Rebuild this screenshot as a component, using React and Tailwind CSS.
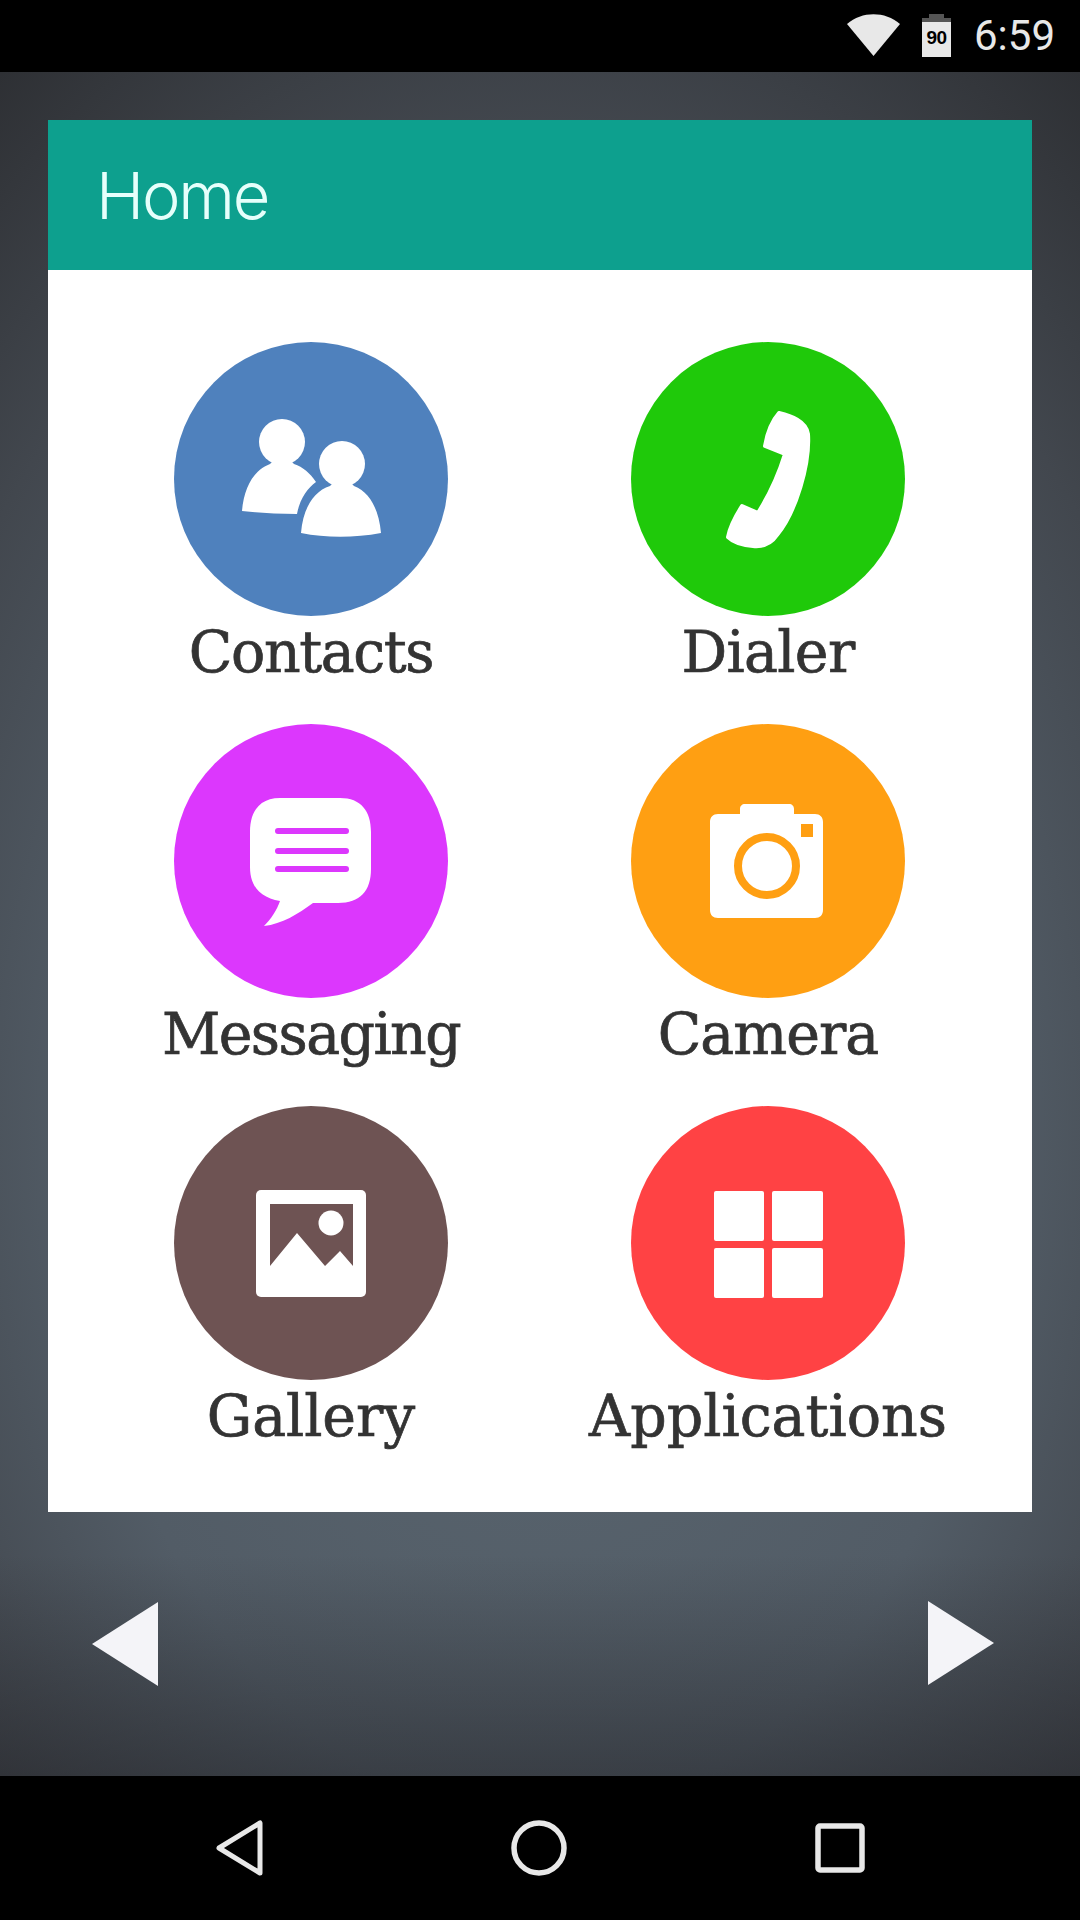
const iconClass = 'w-full h-full blur-[0.6px]';

const Contacts = () => (
  <svg viewBox="0 0 274 274" className={iconClass} fill="#fff">
    <circle cx="108" cy="100" r="23" />
    <path d="M68 169C70 145 80 128 96 122L100 118L116 118L120 122C129 125 136 131 142 140C134 146 126 156 123 172C104 172 85 171 68 169Z" />
    <circle cx="168" cy="122" r="23" />
    <path d="M127 191C129 166 140 149 156 144L160 140L176 140L180 144C196 150 205 168 207 191C180 196 152 196 127 191Z" />
  </svg>
);

const Dialer = () => (
  <svg viewBox="0 0 274 274" className={iconClass} fill="#fff" stroke="#fff" strokeWidth="4" strokeLinejoin="round">
    <path d="M148 71C160 74 175 79 177 92C179 122 165 170 146 193C140 202 132 205 122 204C112 203 102 200 97 195C99 184 106 172 111 164L127 171C137 155 146 138 154 112L134 104C136 92 140 80 148 71Z" />
  </svg>
);

const Messaging = () => (
  <svg viewBox="0 0 274 274" className={iconClass}>
    <path
      fill="#fff"
      d="M106 74L166 74C187 74 197 87 197 108L197 145C197 167 186 179 164 179L139 179C124 190 108 200 90 202C97 195 103 186 106 177C88 174 76 164 76 143L76 108C76 87 86 74 106 74Z"
    />
    <path stroke="#dc37fd" strokeWidth="6" strokeLinecap="round" d="M104 107H172M104 127H172M104 145H172" />
  </svg>
);

const Camera = () => (
  <svg viewBox="0 0 274 274" className={iconClass}>
    <path
      fill="#fff"
      d="M109 90L109 85C109 82 111 80 114 80L158 80C161 80 163 82 163 85L163 90L184 90C189 90 192 93 192 98L192 186C192 191 189 194 184 194L87 194C82 194 79 191 79 186L79 98C79 93 82 90 87 90Z"
    />
    <circle cx="136" cy="142" r="29" fill="none" stroke="#ff9f12" strokeWidth="8" />
    <rect x="170" y="100" width="12" height="13" fill="#ff9f12" />
  </svg>
);

const Gallery = () => (
  <svg viewBox="0 0 274 274" className={iconClass}>
    <rect x="82" y="84" width="110" height="107" rx="5" fill="#fff" />
    <path fill="#6e5353" d="M96 98H179V160L166 145L151 160L123 127L96 160Z" />
    <circle cx="157" cy="117" r="12.5" fill="#fff" />
  </svg>
);

const Applications = () => (
  <svg viewBox="0 0 274 274" className={iconClass} fill="#fff">
    <rect x="83" y="85" width="50" height="50" rx="2" />
    <rect x="141" y="85" width="51" height="50" rx="2" />
    <rect x="83" y="142" width="50" height="50" rx="2" />
    <rect x="141" y="142" width="51" height="50" rx="2" />
  </svg>
);

const apps = [
  { name: 'Contacts', color: 'bg-[#4f81bd]', track: 'tracking-[-1.4px]', Icon: Contacts },
  { name: 'Dialer', color: 'bg-[#1fc90a]', track: 'tracking-[-0.7px]', Icon: Dialer },
  { name: 'Messaging', color: 'bg-[#dc37fd]', track: 'tracking-[-1.6px]', Icon: Messaging },
  { name: 'Camera', color: 'bg-[#ff9f12]', track: 'tracking-[-1px]', Icon: Camera },
  { name: 'Gallery', color: 'bg-[#6e5353]', track: 'tracking-[-0.1px]', Icon: Gallery },
  { name: 'Applications', color: 'bg-[#ff4244]', track: 'tracking-[0px]', Icon: Applications },
];

const App = () => (
  <div className="w-[1080px] h-[1920px] flex flex-col bg-black overflow-hidden font-['Roboto',sans-serif]">
    <div className="h-[72px] flex items-center justify-end pr-[25px]">
      <svg width="53" height="42" viewBox="0 0 53 42" className="mt-[-2px]">
        <path d="M0 10C15 -3 38 -3 53 10L26.5 42Z" fill="#e8e8e8" />
      </svg>
      <div className="w-[29px] h-[43px] ml-[22px] flex flex-col items-center mt-[-1px]">
        <div className="w-[15px] h-[4px] bg-[#555]" />
        <div className="w-[29px] h-[39px] bg-[#e8e8e8] relative">
          <div className="h-[4px] bg-[#555]" />
          <span className="absolute inset-0 pt-[8px] text-center text-[19px] leading-[24px] font-bold text-black font-['Liberation_Sans',sans-serif] tracking-[-0.5px]">90</span>
        </div>
      </div>
      <span className="ml-[23px] text-[#e8e8e8] text-[42px] leading-none font-['Roboto',sans-serif]">6:59</span>
    </div>

    <div className="flex-1 flex flex-col px-12 pt-12 bg-[linear-gradient(to_top,rgba(32,32,36,0.5),rgba(32,32,36,0)_13%),radial-gradient(ellipse_85%_79%_at_50%_63%,#5a6670_0%,#525c66_50%,#42474e_75%,#2d2f33_100%)]">
      <div className="bg-white h-[1392px]">
        <div className="h-[150px] bg-[#0da08e] flex items-center pl-[48px]">
          <h1 className="text-[65px] leading-none font-light text-[#e6fffb] font-['Inter',sans-serif] tracking-[-2.2px]">Home</h1>
        </div>
        <div className="grid grid-cols-[458px_456px] pl-[34px] pt-[72px]">
          {apps.map(({ name, color, track, Icon }) => (
            <div key={name} className="h-[382px] flex flex-col items-center">
              <div className={`w-[274px] h-[274px] rounded-full shrink-0 ${color}`}>
                <Icon />
              </div>
              <span className={`mt-[-1px] text-[57px] leading-[74px] text-[#333] font-['DejaVu_Serif',serif] [-webkit-text-stroke:0.7px_#333] ${track}`}>{name}</span>
            </div>
          ))}
        </div>
      </div>

      <div className="flex-1 flex items-center justify-between pl-[44px] pr-[38px]">
        <svg width="66" height="84" viewBox="0 0 66 84">
          <path d="M66 0V84L0 42Z" fill="#f4f4f8" />
        </svg>
        <svg width="66" height="84" viewBox="0 0 66 84" className="mt-[-2px]">
          <path d="M0 0V84L66 42Z" fill="#f4f4f8" />
        </svg>
      </div>
    </div>

    <div className="h-[144px] flex items-center justify-center gap-[248px] pl-[1px]">
      <svg width="47" height="56" viewBox="0 0 47 56" fill="none" stroke="#e8e8e8" strokeWidth="5" strokeLinejoin="round">
        <path d="M44 3V53L3 28Z" />
      </svg>
      <svg width="56" height="56" viewBox="0 0 56 56" fill="none" stroke="#e8e8e8" strokeWidth="5.5">
        <circle cx="28" cy="28" r="25" />
      </svg>
      <svg width="50" height="50" viewBox="0 0 50 50" fill="none" stroke="#e8e8e8" strokeWidth="5.5" strokeLinejoin="round">
        <rect x="3" y="3" width="44" height="44" rx="2" />
      </svg>
    </div>
  </div>
);

export default App;
